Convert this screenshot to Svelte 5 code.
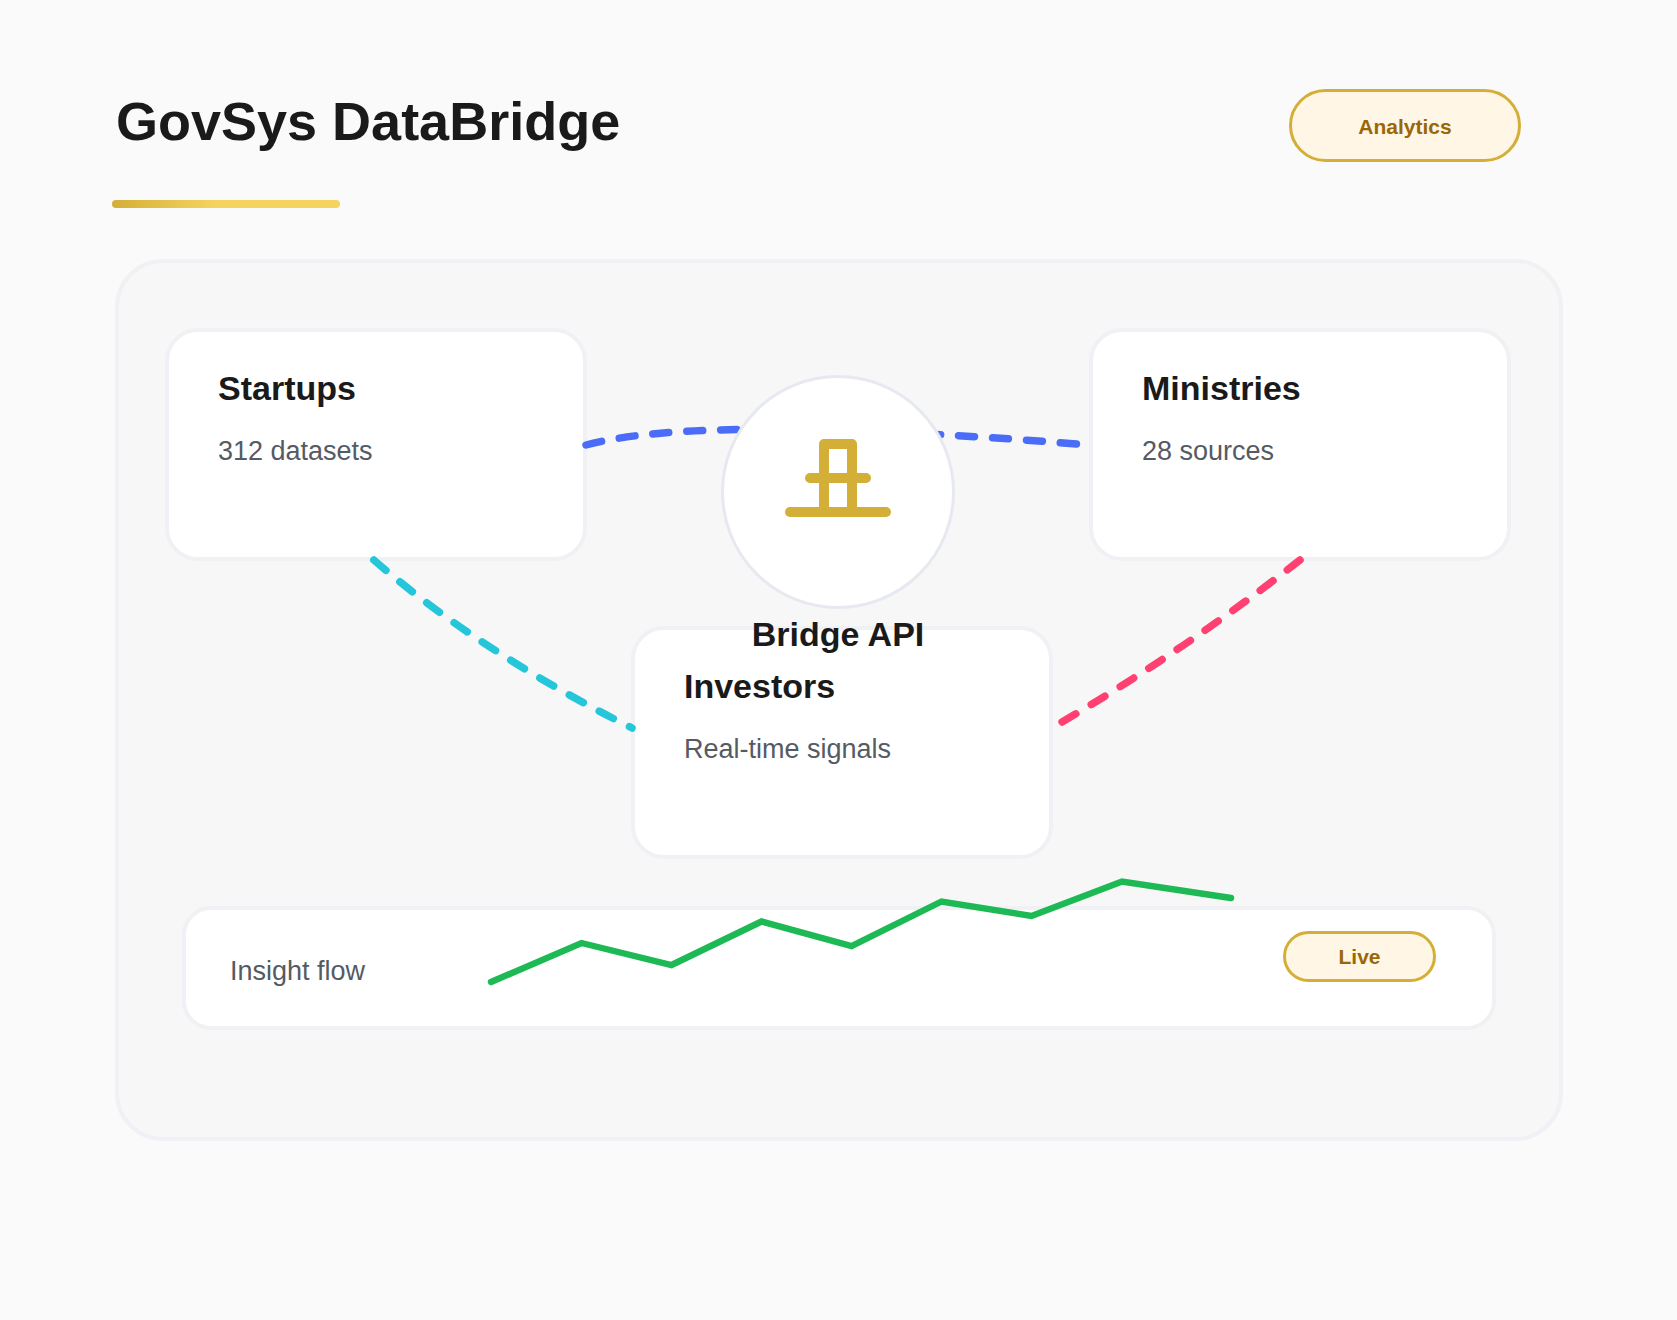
<script lang="ts">
  // diagram coordinates are page pixels, see the viewBox on the overlay svg
  const links = [
    { d: 'M586 445 Q700 414 1077.500 444', color: '#4a6cf7' },
    { d: 'M373.800 560 Q480 652 632 728', color: '#26c6da' },
    { d: 'M1300 560 Q1185 650 1062 722', color: '#ff4070' }
  ];

  const flow = [
    [491, 982], [581.500, 943], [671.500, 965], [761.500, 921.500], [851.500, 946],
    [941.500, 901.500], [1031.500, 916], [1122, 881.500], [1231, 898]
  ];
  const flowPoints = flow.map((p) => p.join(',')).join(' ');
</script>

<div class="page">
  <header class="top">
    <h1>GovSys DataBridge</h1>
    <span class="pill pill-lg">Analytics</span>
  </header>
  <div class="rule"></div>

  <section class="panel">
    <div class="row">
      <div class="card">
        <h2>Startups</h2>
        <p>312 datasets</p>
      </div>
      <div class="card">
        <h2>Ministries</h2>
        <p>28 sources</p>
      </div>
    </div>

    <div class="card investors">
      <h2>Investors</h2>
      <p>Real-time signals</p>
    </div>

    <div class="insight">
      <span class="insight-label">Insight flow</span>
      <span class="pill pill-sm">Live</span>
    </div>

    <svg class="overlay" viewBox="119 263 1440 874" width="1440" height="874" fill="none">
      {#each links as link}
        <path d={link.d} stroke={link.color} stroke-width="7.500" stroke-linecap="round" stroke-dasharray="16 18" />
      {/each}
      <polyline points={flowPoints} stroke="#1db954" stroke-width="6.400" stroke-linecap="round" stroke-linejoin="miter" />
    </svg>

    <div class="hub">
      <svg viewBox="0 0 228 228" width="228" height="228" fill="none" stroke="#d4af37" stroke-width="10" stroke-linecap="round" stroke-linejoin="round">
        <path d="M100 134 V66 H128 V134" />
        <path d="M86 100 H142" />
        <path d="M66 134 H162" />
      </svg>
      <span class="hub-label">Bridge API</span>
    </div>
  </section>
</div>

<style>
  :global(body) {
    margin: 0;
    background: #fafafa;
    font-family: "Liberation Sans", Arial, sans-serif;
  }

  .page {
    width: 1677px;
    height: 1320px;
    overflow: hidden;
  }

  .top {
    display: flex;
    justify-content: space-between;
    align-items: flex-start;
    padding: 89px 156px 0 116px;
    height: 111px;
  }

  h1 {
    margin: 1px 0 0;
    font-size: 54px;
    line-height: 62px;
    font-weight: 700;
    color: #1a1a1a;
  }

  .pill {
    display: flex;
    align-items: center;
    justify-content: center;
    box-sizing: border-box;
    background: #fff6e5;
    border: 3px solid #d4af37;
    border-radius: 999px;
    color: #9a6708;
    font-weight: 700;
  }

  .pill-lg {
    width: 232px;
    height: 73px;
    padding-top: 3px;
    font-size: 21px;
  }

  .pill-sm {
    width: 153px;
    height: 51px;
    font-size: 21px;
  }

  .rule {
    width: 228px;
    height: 8px;
    margin-left: 112px;
    border-radius: 4px;
    background: linear-gradient(90deg, #d4af37, #f4d35e 45%);
  }

  .panel {
    position: relative;
    box-sizing: border-box;
    width: 1448px;
    height: 882px;
    margin: 51px 0 0 115px;
    padding: 65px 46px 0;
    background: #f7f7f8;
    border: 4px solid #f0f1f5;
    border-radius: 48px;
  }

  .row {
    display: flex;
    justify-content: space-between;
    width: 1346px;
  }

  .card {
    box-sizing: border-box;
    width: 422px;
    height: 233px;
    padding: 36px 49px;
    background: #fff;
    border: 4px solid #f0f1f5;
    border-radius: 33px;
  }

  .investors {
    margin: 65px 0 0 466px;
  }

  h2 {
    margin: 0;
    font-size: 34px;
    line-height: 40px;
    font-weight: 700;
    color: #1a1a1a;
  }

  .card p {
    margin: 23px 0 0;
    font-size: 27px;
    line-height: 40px;
    color: #555b63;
  }

  .insight {
    display: flex;
    justify-content: space-between;
    box-sizing: border-box;
    width: 1314px;
    height: 124px;
    margin: 47px 0 0 17px;
    padding: 21px 56px 0 44px;
    background: #fff;
    border: 4px solid #f0f1f5;
    border-radius: 29px;
  }

  .insight-label {
    margin-top: 24px;
    font-size: 27px;
    line-height: 32px;
    color: #555b63;
  }

  .overlay {
    position: absolute;
    left: 0;
    top: 0;
    pointer-events: none;
  }

  .hub {
    position: absolute;
    left: 602px;
    top: 112px;
    box-sizing: border-box;
    width: 234px;
    height: 234px;
    background: #fff;
    border: 3px solid #e6e9ef;
    border-radius: 50%;
  }

  .hub svg {
    display: block;
  }

  .hub-label {
    position: absolute;
    left: 0;
    right: 0;
    top: 236px;
    text-align: center;
    font-size: 34px;
    line-height: 40px;
    font-weight: 700;
    color: #1a1a1a;
  }
</style>
